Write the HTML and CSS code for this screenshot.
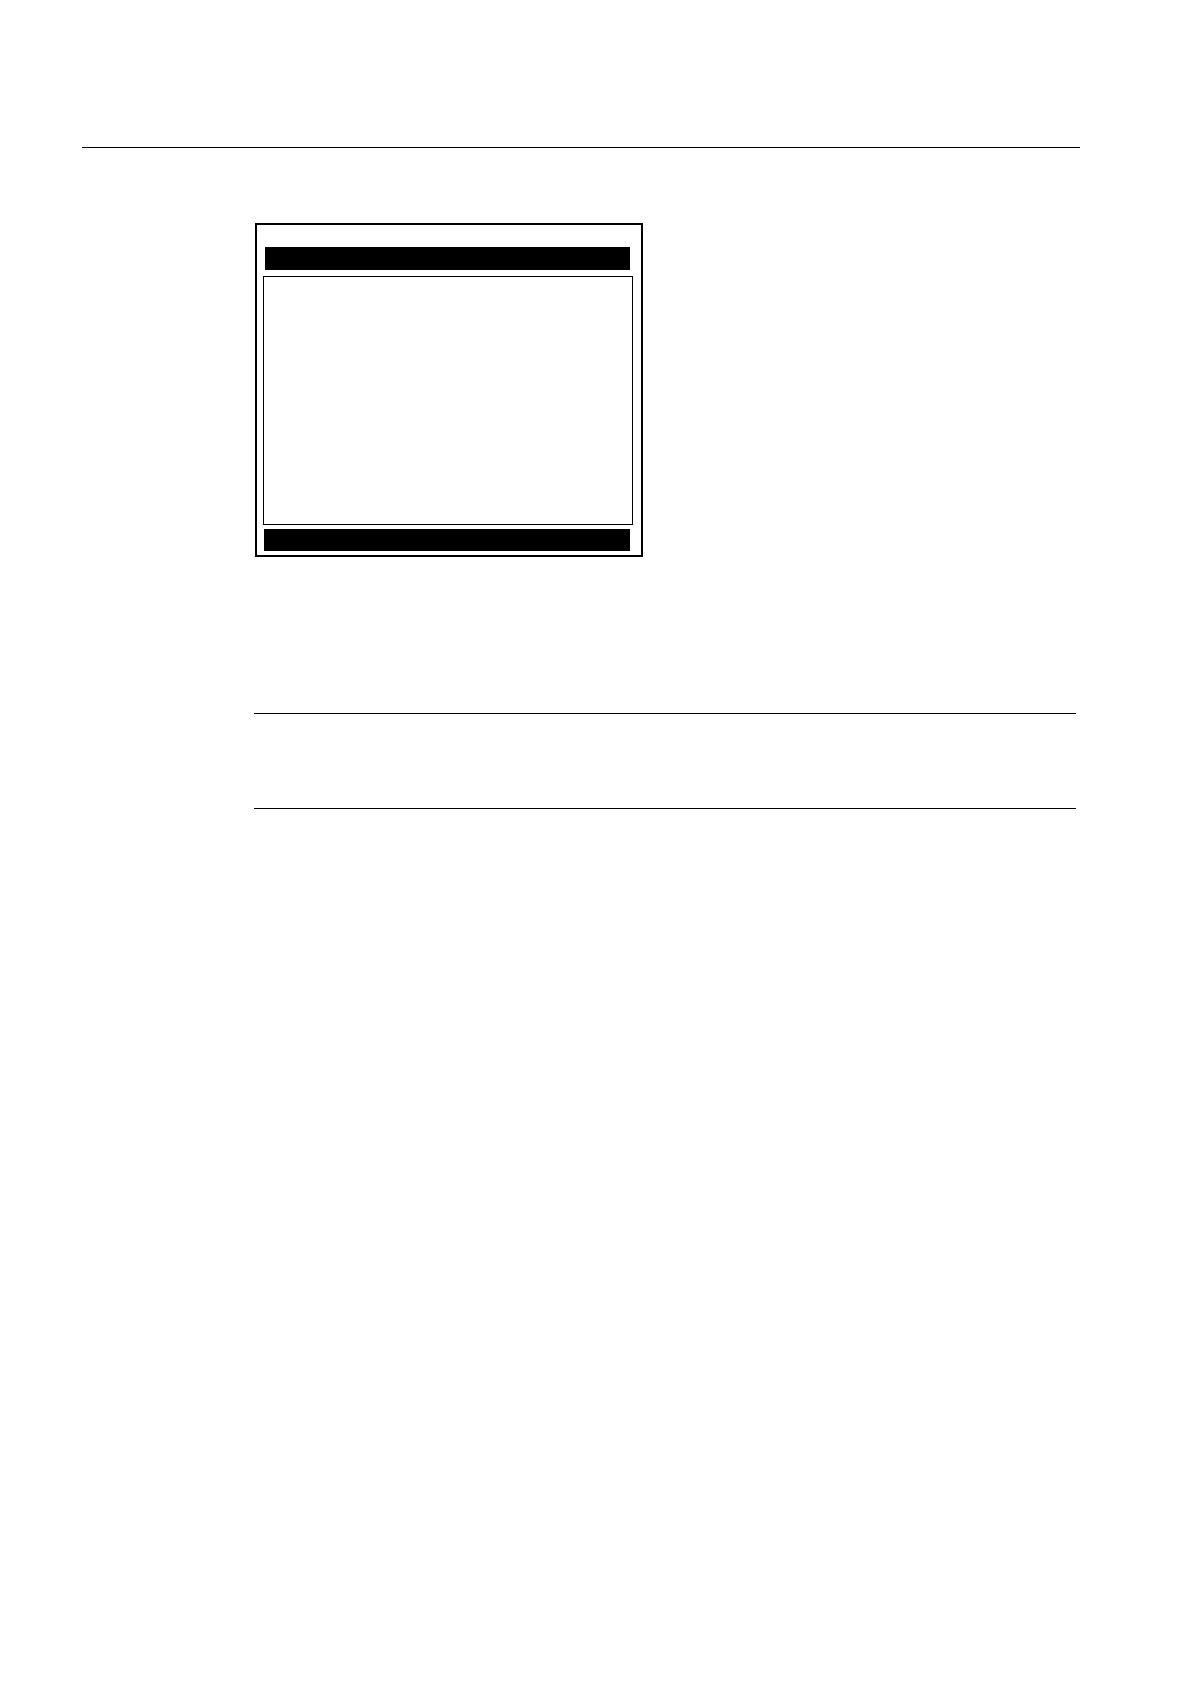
FILE: index.html
```html
<!DOCTYPE html>
<html lang='en'>

<head>
    <meta charset='UTF-8'>
    <title>Screen layout</title>
    <link rel="stylesheet" href="styles.css">
</head>

<body>
    <div class='page'>
        <header class='header'></header>
        <main class='content'>
            <div class='screen'>
                <div class='title-bar'></div>
                <div class='display'></div>
                <div class='status-bar'></div>
            </div>
            <div class='note'></div>
        </main>
    </div>
</body>

</html>
```

FILE: styles.css
```css
* {
    padding: 0;
    margin: 0;
    box-sizing: border-box;
}

body {
    background: white;
    font-family: "Liberation Sans", sans-serif;
}

.page {
    min-height: 100vh;
    padding: 0 110px 0 82px;
}

.header {
    height: 148px;
    border-bottom: black solid 1px;
}

.content {
    display: flex;
    flex-direction: column;
    padding: 75px 4px 0 172px;
}

/* operator panel outline */
.screen {
    display: flex;
    flex-direction: column;
    width: 388px;
    max-width: 100%;
    margin-left: 1px;
    padding: 22px 8px 4px 6px;
    border: black solid 2px;
}

.title-bar {
    height: 23px;
    margin: 0 3px 6px 2px;
    background: black;
}

.display {
    height: 249px;
    border: black solid 1px;
}

.status-bar {
    height: 22px;
    margin: 4px 3px 0 1px;
    background: black;
}

/* empty note between two rules */
.note {
    height: 96px;
    margin-top: 156px;
    border-top: black solid 1px;
    border-bottom: black solid 1px;
}
```
